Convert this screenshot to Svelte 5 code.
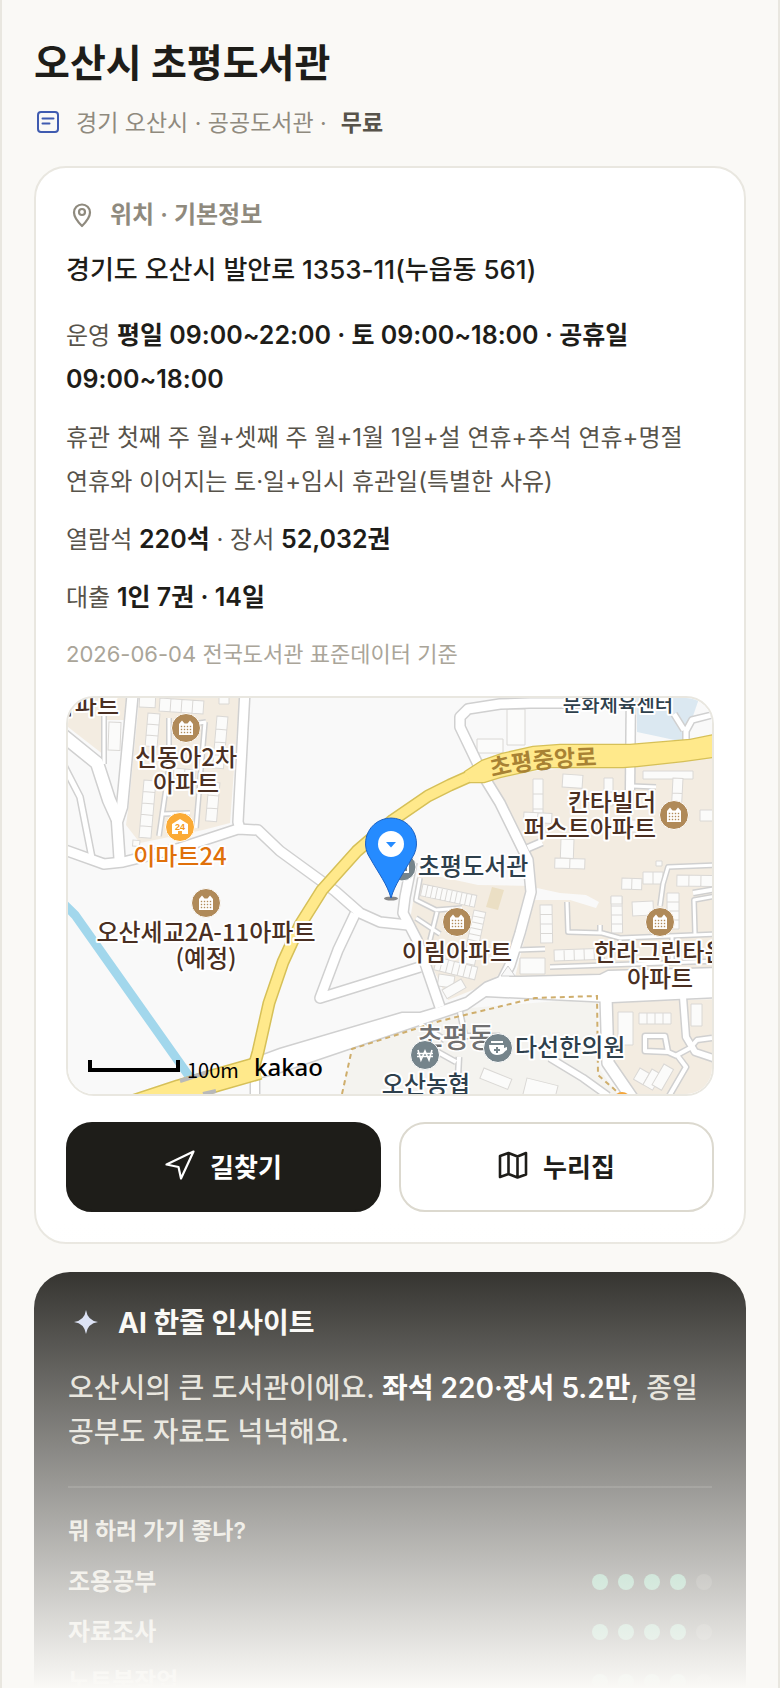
<script>
  const activities = [
    { name: '조용공부', score: 4 },
    { name: '자료조사', score: 4 },
    { name: '노트북작업', score: 4 }
  ];

  // Each road is a centre line and a width; casings are drawn before fills so junctions merge.
  const roads = [
    ['M133 690L122 807L117 822L120 866', 11],
    ['M60 733L97 763L109 800L118 820', 13],
    ['M62 762L80 797L92 858', 6],
    ['M62 849L104 864L123 862L180 848L238 829L258 830L280 851L335 891L360 913L380 922L408 925', 10],
    ['M245 690L238 822L240 829', 10],
    ['M104 690L104 764', 4],
    ['M169 718V768L159 836M163 814L190 813M205 722L196 828M192 724L206 722', 4],
    ['M632 703L530 703L500 704L468 709L460 717L460 727L484 777L500 803L528 860L531 892L520 933L510 965L500 985', 10],
    ['M631 690L630 790', 9],
    ['M632 786L656 787', 4],
    ['M528 848L542 842', 7],
    ['M716 714L692 720L686 731L686 744M674 714L684 730', 6],
    ['M355 914L338 950L320 998L420 967', 10],
    ['M412 862L405 897L403 913L417 940L440 1007', 10],
    ['M420 878L416 900L436 910L462 908M437 912L430 940M416 918L440 934', 4],
    ['M567 902L568 932L602 933L620 938L716 934M600 925V933', 4],
    ['M660 906L663 884L668 867L716 865', 4],
    ['M695 934L694 900L716 896', 4],
    ['M550 967L716 961M672 937L672 965M620 940L621 950', 4],
    ['M516 950L545 949', 4],
    ['M606 997L608 1063L632 1098', 12],
    ['M683 997L686 1037L695 1052L716 1059', 7],
    ['M712 1038L697 1040L690 1048L677 1055L686 1067L668 1098', 5],
    ['M645 1036H665L668 1052L645 1051ZM668 1052L677 1056', 5],
    ['M550 1058L583 1078L608 1096', 7],
    ['M460 1012L465 1036L500 1036M459 1057L457 1098M420 1024L445 1040M438 1052L456 1062', 5],
    ['M693 893L716 889', 5]
  ];

  // x, y, cell width, cell height, columns, rows, rotation
  const blocks = [
    [148, 713, 12, 11, 1, 3, 5], [144, 780, 12, 11.5, 1, 5, 5], [160, 698, 11, 13, 4, 1, 4],
    [140, 690, 16, 17, 1, 1, 3], [217, 716, 11, 13, 1, 4, 5], [219, 694, 10, 10, 1, 1, 0],
    [209, 782, 11, 13, 1, 3, 5], [109, 722, 12, 28, 1, 1, 2], [133, 840, 7, 6, 1, 1, 5],
    [174, 768, 11, 8, 2, 1, 5], [507, 709, 18, 36, 1, 1, 0], [477, 739, 26, 14, 1, 1, 0],
    [563, 774, 20, 13, 1, 1, 4], [533, 779, 10, 15, 1, 3, 0], [524, 812, 14, 10, 2, 1, 3],
    [604, 778, 9, 14, 1, 2, 0], [643, 771, 50, 8, 1, 1, 0], [673, 778, 10, 15, 1, 2, 3],
    [561, 839, 13, 19, 1, 1, 2], [555, 858, 15, 10, 2, 1, 2], [598, 820, 16, 12, 3, 1, 0],
    [622, 878, 10, 11, 2, 1, 2], [643, 872, 10, 12, 2, 1, 0], [677, 875, 12, 11, 3, 1, 1],
    [700, 810, 14, 11, 1, 1, 0], [656, 861, 6, 5, 1, 1, 0], [540, 905, 12, 9.5, 1, 4, -1],
    [611, 897, 11, 9, 1, 4, -1], [554, 950, 10, 11, 5, 1, -2], [632, 902, 21, 14, 1, 1, -3],
    [667, 893, 12, 9, 1, 4, 0], [520, 958, 25, 16, 1, 1, 0], [611, 896, 11, 8, 1, 1, 0],
    [639, 1013, 8, 11, 4, 1, 0], [691, 1004, 11, 22, 1, 1, 0], [618, 1012, 15, 33, 1, 1, 0],
    [640, 1068, 11, 13, 1, 1, 30], [652, 1069, 11, 18, 1, 1, 30], [664, 1064, 11, 24, 1, 1, 30],
    [484, 1068, 30, 11, 1, 1, 22], [527, 1078, 32, 18, 1, 1, 14], [439, 974, 16, 12, 1, 1, 8],
    [442, 990, 22, 10, 1, 1, -30], [423, 884, 5, 12, 11, 1, 12], [474, 910, 12, 6, 1, 10, 12],
    [437, 957, 6, 13, 7, 1, 14]
  ];

  const lines = (b) => {
    const [x, y, w, h, nx, ny] = b;
    let d = `M${x} ${y}h${w * nx}v${h * ny}h${-w * nx}z`;
    for (let i = 1; i < nx; i++) d += `M${x + w * i} ${y}v${h * ny}`;
    for (let j = 1; j < ny; j++) d += `M${x} ${y + h * j}h${w * nx}`;
    return d;
  };

  const apartments = [[186, 728], [206, 903], [457, 922], [674, 815], [660, 922]];
  const windowGrid = [-4.5, -1.5, 1.5, 4.5].flatMap((x) => [-1.5, 1.5, 4.5].map((y) => [x, y]));

  const mainRoad =
    'M250 1060L280 1049L402 1013L420 1013L440 1007L466 998L485 983L500 977L520 977L600 975L608 971L720 968V997L612 1002L486 996L467 1009L413 1027L280 1072L250 1080Z';
  const narrow = 'M253 1070L258 1052L269 1003L283 962L300 925L322 890L357 851L393 820L428 796L450 785L468 777';
  const wide =
    'M465 772L482 761L502 754L533 747L560 745L630 745L690 740L720 734V756L683 761L637 766L623 767H545L500 777L484 782L470 782Z';
  const lower = 'M110 1114L180 1091L217 1080L259 1068';

  const labels = [
    ['apt', 'end', 119, 714, '아파트'], ['apt', 'middle', 186, 766, '신동아2차'],
    ['apt', 'middle', 186, 792, '아파트'], ['mart', 'middle', 180, 865, '이마트24'],
    ['apt', 'middle', 206, 941, '오산세교2A-11아파트'], ['apt', 'middle', 206, 967, '(예정)'],
    ['place', 'start', 418, 875, '초평도서관'], ['apt', 'middle', 457, 961, '이림아파트'],
    ['apt', 'end', 656, 811, '칸타빌더'], ['apt', 'end', 656, 837, '퍼스트아파트'],
    ['place small', 'middle', 618, 712, '문화체육센터'], ['apt', 'start', 594, 961, '한라그린타운'],
    ['apt', 'middle', 660, 987, '아파트'], ['place', 'start', 515, 1056, '다선한의원'],
    ['place', 'middle', 426, 1093, '오산농협']
  ];
</script>

<main>
  <header>
    <h1>오산시 초평도서관</h1>
    <p class="meta">
      <svg viewBox="0 0 28 28" aria-hidden="true">
        <g fill="none" stroke="#3f5bb0" stroke-width="2" stroke-linecap="round">
          <rect x="4" y="3" width="20" height="20" rx="3" />
          <path d="M8.500 9.500h11M8.500 14.500h7" />
        </g>
      </svg>
      <span>경기 오산시 · 공공도서관 ·</span>
      <strong>무료</strong>
    </p>
  </header>

  <section class="card">
    <h2>
      <svg viewBox="0 0 28 28" aria-hidden="true">
        <g fill="none" stroke="currentColor" stroke-width="2.200">
          <path d="M14 25C10 21 6 16.500 6 11.500A8 8 0 0 1 22 11.500C22 16.500 18 21 14 25Z" stroke-linejoin="round" />
          <circle cx="14" cy="11" r="3" />
        </g>
      </svg>
      위치 · 기본정보
    </h2>
    <p class="address">경기도 오산시 발안로 1353-11(누읍동 561)</p>
    <div class="facts">
      <p>운영 <b>평일 09:00~22:00 · 토 09:00~18:00 · 공휴일 09:00~18:00</b></p>
      <p>휴관 첫째 주 월+셋째 주 월+1월 1일+설 연휴+추석 연휴+명절 연휴와 이어지는 토·일+임시 휴관일(특별한 사유)</p>
      <p>열람석 <b>220석</b> · 장서 <b>52,032권</b></p>
      <p>대출 <b>1인 7권 · 14일</b></p>
    </div>
    <p class="source">2026-06-04 전국도서관 표준데이터 기준</p>

    <div class="map">
      <svg viewBox="68 698 644 396" preserveAspectRatio="xMidYMid slice" role="img" aria-label="초평도서관 지도">
        <rect x="60" y="690" width="660" height="410" fill="#f9f9f9" />
        <g fill="#f3ece1">
          <path d="M60 690H127L124 720H104V755L68 727Z" />
          <path d="M140 690H240L230 823L203 830L140 843L126 825L129 803Z" />
          <path d="M418 872L478 885L534 886L512 965L485 985L448 1000L410 920Z" />
          <path d="M480 777L720 752V970L515 977L537 890L500 805Z" />
          <path d="M612 1002L720 999V1100H637L614 1062Z" />
        </g>
        <path d="M353 1048L425 1025L470 1008L596 998L600 1070L622 1100H340Z" fill="#f4f3ef" />
        <path d="M637 690H702L684 742L637 732Z" fill="#dbe8f1" />
        <path d="M492 887L504 890L498 910L486 907Z" fill="#ebdfc4" />
        <path d="M537 888L560 893L586 895L599 902L596 908L570 900L535 900Z" fill="#f9f9f9" />
        <g fill="#fbfbfa" stroke="#dad8d5" stroke-width="1">
          {#each blocks as b}
            <path d={lines(b)} transform="rotate({b[6]} {b[0]} {b[1]})" />
          {/each}
        </g>
        <path d="M62 902L75 915L196 1086" fill="none" stroke="#a2d7ec" stroke-width="9" />
        <g fill="none" stroke="#d0d0d0" stroke-linejoin="round">
          {#each roads as r}<path d={r[0]} stroke-width={r[1] + 2} />{/each}
          <path d={mainRoad} stroke-width="3" />
          <path d="M255 1080V1100" stroke-width="11" />
        </g>
        <g fill="none" stroke="#ffffff" stroke-linejoin="round">
          {#each roads as r}<path d={r[0]} stroke-width={r[1] - 1} />{/each}
          <path d={mainRoad} fill="#ffffff" stroke="none" />
          <path d="M255 1080V1100" stroke-width="8" />
        </g>
        <path d="M501 976L508 966L515 976Z" fill="#f9f9f9" stroke="#d0d0d0" />
        <path d="M342 1094L352 1049L440 1021L535 998L597 996L598 1075L622 1096" fill="none" stroke="#cfae6c" stroke-width="2" stroke-dasharray="5 4" />
        <g fill="none" stroke="#d6c058" stroke-linejoin="round">
          <path d={narrow} stroke-width="13" />
          <path d={wide} stroke-width="2.500" />
          <path d={lower} stroke-width="24" />
        </g>
        <g fill="none" stroke="#ffe98b" stroke-linejoin="round">
          <path d={narrow} stroke-width="10" />
          <path d={wide} fill="#ffe98b" stroke="none" />
          <path d={lower} stroke-width="21" />
        </g>
        <path d="M180 1081L208 1072M203 1094L216 1091" stroke="#b9b9b9" stroke-width="4" />

        <path id="avenue" d="M492 777Q530 766 612 765" fill="none" />
        <text class="avenue"><textPath href="#avenue">초평중앙로</textPath></text>
        <text class="town" x="417" y="1048">초평동</text>

        {#each apartments as [x, y]}
          <g transform="translate({x} {y})">
            <circle r="14.500" fill="#b08a59" stroke="#fff" />
            <path d="M-7 7V-4L-4 -7.500L-1.500 -4.500H1.500L4 -7.500L7 -4V7Z" fill="#fff" />
            {#each windowGrid as [wx, wy]}
              <rect x={wx - 0.7} y={wy - 0.7} width="1.400" height="1.400" fill="#b08a59" />
            {/each}
          </g>
        {/each}
        <g transform="translate(180 827)">
          <circle r="14.500" fill="#fbab36" stroke="#fff" />
          <path d="M-8 7V-3L0 -8L8 -3V7H2V4H-2V7Z" fill="#fff" />
          <text class="badge" y="3" fill="#f59a20">24</text>
        </g>
        <g transform="translate(402 867)">
          <circle r="14" fill="#75848b" stroke="#fff" />
          <path d="M-5 -6H6V5H-5" fill="none" stroke="#fff" stroke-width="2" />
        </g>
        <g transform="translate(425 1055)">
          <circle r="14.500" fill="#75848b" stroke="#fff" />
          <path d="M-7 -5L-4 5L0 -4L4 5L7 -5M-8 -1.500H8M-8 1.500H8" fill="none" stroke="#fff" stroke-width="1.600" />
        </g>
        <g transform="translate(498 1048)">
          <circle r="14.500" fill="#75848b" stroke="#fff" />
          <path d="M-9 -3H6V0L9 -1V2C6 3 6 7 -1 7C-6 7 -9 3 -9 -3Z" fill="#fff" />
          <path d="M-7 -6H5" stroke="#fff" stroke-width="2" />
          <path d="M-4 2H2M-1 -1V5" stroke="#75848b" stroke-width="2" />
        </g>
        <circle cx="622" cy="1101" r="9" fill="#f3a53a" />

        {#each labels as [kind, anchor, x, y, text]}
          <text class="label {kind}" text-anchor={anchor} {x} {y}>{text}</text>
        {/each}

        <ellipse cx="391" cy="898.500" rx="7" ry="2" fill="#555" opacity=".7" />
        <path d="M391 898C387 884 379 874 370 858A25.500 25.500 0 1 1 412 858C403 874 395 884 391 898Z" fill="#258bff" stroke="#1c62c4" />
        <circle cx="391" cy="844" r="13" fill="#fff" />
        <path d="M386 842H396L391 847.500Z" fill="#258bff" />

        <path d="M90 1060V1070H178V1060" fill="none" stroke="#000" stroke-width="4" />
        <text class="scale" x="187" y="1078">100m</text>
        <text class="kakao" x="254" y="1076">kakao</text>
      </svg>
    </div>

    <div class="actions">
      <button type="button" class="primary">
        <svg viewBox="0 0 30 30" aria-hidden="true">
          <path d="M28.500 1.500L1.500 14.500L13.500 17L16 28.500Z" fill="none" stroke="currentColor" stroke-width="2.200" stroke-linejoin="round" />
        </svg>
        길찾기
      </button>
      <button type="button">
        <svg viewBox="0 0 30 30" aria-hidden="true">
          <path d="M2 6L10.500 3L19.500 6.500L28 3V24.500L19.500 27.500L10.500 24L2 27ZM10.500 3V24M19.500 6.500V27.500" fill="none" stroke="currentColor" stroke-width="2.600" stroke-linejoin="round" />
        </svg>
        누리집
      </button>
    </div>
  </section>

  <section class="insight">
    <h2>
      <svg viewBox="0 0 28 28" aria-hidden="true">
        <path d="M14 1Q15.500 11.500 26 13Q15.500 14.500 14 25Q12.500 14.500 2 13Q12.500 11.500 14 1Z" fill="#d5ddf5" />
      </svg>
      AI 한줄 인사이트
    </h2>
    <p>오산시의 큰 도서관이에요. <b>좌석 220·장서 5.2만</b>, 종일 공부도 자료도 넉넉해요.</p>
    <h3>뭐 하러 가기 좋나?</h3>
    <ul>
      {#each activities as a}
        <li>
          <span>{a.name}</span>
          <span class="dots" role="img" aria-label="5점 중 {a.score}점">
            {#each [1, 2, 3, 4, 5] as n}<i class:on={n <= a.score}></i>{/each}
          </span>
        </li>
      {/each}
    </ul>
  </section>
  <div class="fade"></div>
</main>

<style>
  :global(body) {
    background: #faf9f6;
  }
  main {
    position: relative;
    box-sizing: border-box;
    height: 100vh;
    overflow: hidden;
    padding: 37px 32px 0;
    border: solid #e9e7e0;
    border-width: 0 2px;
    background: #faf9f6;
    color: #1e1d19;
    font-family: Inter, 'Noto Sans CJK KR', sans-serif;
    word-break: keep-all;
  }
  h1, h2, h3, p, ul {
    margin: 0;
    padding: 0;
  }
  h1 {
    font-size: 39px;
    line-height: 52px;
    font-weight: 700;
  }
  .meta {
    display: flex;
    align-items: center;
    gap: 14px;
    margin: 18px 0 27px;
    font-size: 23px;
    line-height: 32px;
    color: #8f8a7e;
  }
  .meta svg, h2 svg {
    width: 28px;
    height: 28px;
    flex: none;
  }
  .meta strong {
    font-weight: 600;
    color: #57534a;
  }
  .card {
    padding: 30px 30px;
    background: #fff;
    border: 2px solid #e9e7e0;
    border-radius: 32px;
  }
  h2 {
    display: flex;
    align-items: center;
    gap: 14px;
    font-size: 24px;
    line-height: 34px;
    font-weight: 600;
    color: #8f8a7e;
  }
  .card h2 {
    padding-left: 2px;
  }
  .address {
    margin: 18px 0 24px;
    font-size: 26px;
    line-height: 40px;
    font-weight: 500;
  }
  .facts {
    display: grid;
    gap: 14px;
    font-size: 24px;
    line-height: 44px;
    color: #57534a;
  }
  .facts p {
    height: auto;
  }
  .facts b {
    font-size: 25px;
    line-height: 24px;
    font-weight: 600;
    color: #1e1d19;
  }
  .source {
    margin: 16px 0 24px;
    font-size: 22px;
    line-height: 36px;
    color: #aaa599;
  }
  .map {
    overflow: hidden;
    border: 2px solid #e9e7e0;
    border-radius: 28px;
  }
  .map svg {
    display: block;
    width: 100%;
    font-family: 'Noto Sans CJK KR', sans-serif;
  }
  .label {
    font-size: 24px;
    font-weight: 500;
    stroke: #fff;
    stroke-width: 4px;
    stroke-linejoin: round;
    paint-order: stroke;
  }
  .apt {
    fill: #4a2f22;
  }
  .mart {
    fill: #e0700a;
  }
  .place {
    fill: #2e404c;
  }
  .small {
    font-size: 20px;
  }
  .avenue {
    font-size: 23px;
    font-weight: 700;
    fill: #a88234;
  }
  .town {
    font-size: 28px;
    font-weight: 500;
    fill: #707070;
    stroke: #fff;
    stroke-width: 3px;
    paint-order: stroke;
  }
  .badge {
    font: 700 9px 'Liberation Sans', sans-serif;
    text-anchor: middle;
  }
  .scale {
    font-size: 20px;
  }
  .kakao {
    font: 500 24px 'Noto Sans', sans-serif;
  }
  .actions {
    display: grid;
    grid-template-columns: 1fr 1fr;
    gap: 18px;
    margin-top: 26px;
  }
  button {
    display: flex;
    align-items: center;
    justify-content: center;
    gap: 15px;
    height: 90px;
    padding: 0 0 4px;
    border: 2px solid #dcd9cf;
    border-radius: 26px;
    background: #fff;
    color: #1e1d19;
    font: 600 26px Inter, 'Noto Sans CJK KR', sans-serif;
  }
  button svg {
    width: 30px;
    height: 30px;
  }
  .primary {
    border-color: #1e1d19;
    background: #1e1d19;
    color: #fff;
  }
  .insight {
    margin-top: 28px;
    padding: 34px;
    border-radius: 36px;
    background: #1e1d19;
    color: #dedbd0;
  }
  .insight h2 {
    gap: 18px;
    padding-left: 4px;
    font-size: 28px;
    line-height: 34px;
    font-weight: 700;
    color: #faf9f6;
  }
  .insight p {
    padding: 26px 0 32px;
    border-bottom: 2px solid #3a3934;
    font-size: 28px;
    line-height: 44px;
    font-weight: 500;
  }
  .insight b {
    font-weight: 600;
    color: #fff;
  }
  h3 {
    margin: 26px 0 9px;
    font-size: 23px;
    line-height: 34px;
    font-weight: 600;
  }
  ul {
    list-style: none;
  }
  li {
    display: flex;
    align-items: center;
    justify-content: space-between;
    font-size: 24px;
    line-height: 50px;
    font-weight: 600;
  }
  .dots {
    display: flex;
    gap: 10px;
  }
  i {
    width: 16px;
    height: 16px;
    border-radius: 50%;
    background: #3f3e39;
  }
  .on {
    background: #55b088;
  }
  .fade {
    position: absolute;
    inset: auto 0 0;
    height: 466px;
    margin: 0 -2px;
    background: linear-gradient(rgba(250, 249, 246, 0), #faf9f6);
    pointer-events: none;
  }
</style>
